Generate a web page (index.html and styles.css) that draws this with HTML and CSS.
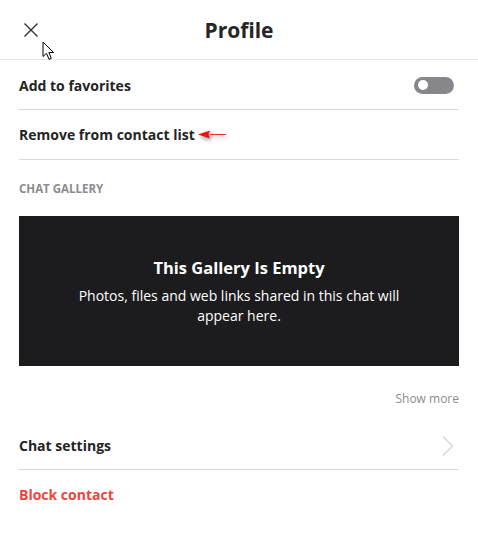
FILE: index.html
```html
<!DOCTYPE html>
<html>
<head>
  <title>Profile</title>
  <link rel="stylesheet" href="styles.css">
</head>
<body>
  <div class="panel">
    <header class="top">
      <button class="close" aria-label="Close">
        <svg width="16" height="16" viewBox="0 0 16 16"><path d="M1.5 1.5 L14.5 14.5 M14.5 1.5 L1.5 14.5" stroke="#2b2b2b" stroke-width="1.3" fill="none"/></svg>
      </button>
      <h1 class="title">Profile</h1>
      <svg class="cursor" width="14" height="20" viewBox="0 0 14 20"><path d="M1 1 L1 15.5 L4.5 12.3 L7 18.3 L9.3 17.3 L6.9 11.5 L11.6 11.5 Z" fill="#fff" stroke="#000" stroke-width="1" stroke-linejoin="miter"/></svg>
    </header>

    <div class="content">
      <div class="row first">
        <span class="label">Add to favorites</span>
        <span class="toggle"><span class="knob"></span></span>
      </div>
      <div class="row">
        <span class="label">Remove from contact list</span>
        <svg class="pointer" width="34" height="14" viewBox="0 0 34 14"><path d="M14 6.5 L30 6.5" stroke="#e23030" stroke-width="1"/><path d="M2 6.5 L14 2.5 L12.5 6.5 L14 10.5 Z" fill="#f01010"/></svg>
      </div>

      <div class="section">CHAT GALLERY</div>

      <div class="gallery">
        <h2>This Gallery Is Empty</h2>
        <p>Photos, files and web links shared in this chat will appear here.</p>
      </div>

      <div class="more">Show more</div>

      <div class="row nav">
        <span class="label">Chat settings</span>
        <svg width="14" height="22" viewBox="0 0 14 22"><path d="M2 1.5 L11.5 11 L2 20.5" stroke="#d4d4d4" stroke-width="1.2" fill="none"/></svg>
      </div>
      <div class="row last">
        <span class="label danger">Block contact</span>
      </div>
    </div>
  </div>
</body>
</html>
```

FILE: styles.css
```css
body {
  margin: 0;
  background: #fff;
  font-family: "Open Sans", "Noto Sans", sans-serif;
  color: #1f1f1f;
}
.panel {
  width: 478px;
}
.top {
  position: relative;
  height: 59px;
  display: flex;
  align-items: center;
  justify-content: center;
  border-bottom: 1px solid #e4e4e4;
}
.close {
  position: absolute;
  left: 23px;
  top: 22px;
  padding: 0;
  border: 0;
  background: none;
  width: 16px;
  height: 16px;
}
.cursor {
  position: absolute;
  left: 42px;
  top: 41px;
}
.title {
  margin: 0;
  font-size: 21px;
  font-weight: 700;
  color: #252525;
  padding-top: 1px;
}
.content {
  margin: -1px 19px 0;
  border-top: 1px solid #bcbcbc;
}
.row {
  height: 49px;
  display: flex;
  align-items: center;
  justify-content: space-between;
  border-bottom: 1px solid #d9d9d9;
}
.row.first {
  height: 48px;
  padding-top: 1px;
}
.label {
  font-size: 14px;
  font-weight: 700;
  color: #242424;
}
.row .pointer {
  margin-right: auto;
  margin-left: 1px;
  filter: drop-shadow(1px 2px 2px rgba(0,0,0,0.45));
}
.toggle {
  width: 40px;
  height: 17px;
  border-radius: 9px;
  background: #87878b;
  display: flex;
  align-items: center;
  padding-left: 4px;
  margin-right: 5px;
  box-sizing: border-box;
}
.knob {
  width: 10px;
  height: 10px;
  border-radius: 50%;
  background: #fff;
}
.section {
  padding: 21px 0 0;
  height: 35px;
  font-size: 11.5px;
  font-weight: 700;
  color: #8c8c90;
}
.gallery {
  background: #1c1c1e;
  height: 150px;
  color: #fff;
  text-align: center;
  display: flex;
  flex-direction: column;
  justify-content: center;
  padding: 0 48px;
  box-sizing: border-box;
}
.gallery h2 {
  margin: 0 0 7px;
  font-size: 16.5px;
  font-weight: 700;
}
.gallery p {
  margin: 0;
  font-size: 14px;
  line-height: 20px;
}
.more {
  text-align: right;
  font-size: 12px;
  color: #8c8c8c;
  padding: 24px 0 0;
  height: 30px;
}
.row.nav {
  height: 47px;
  padding-top: 2px;
}
.row.nav svg {
  margin-right: 4px;
}
.row.last {
  border-bottom: 0;
}
.danger {
  color: #f0443a;
}
```
